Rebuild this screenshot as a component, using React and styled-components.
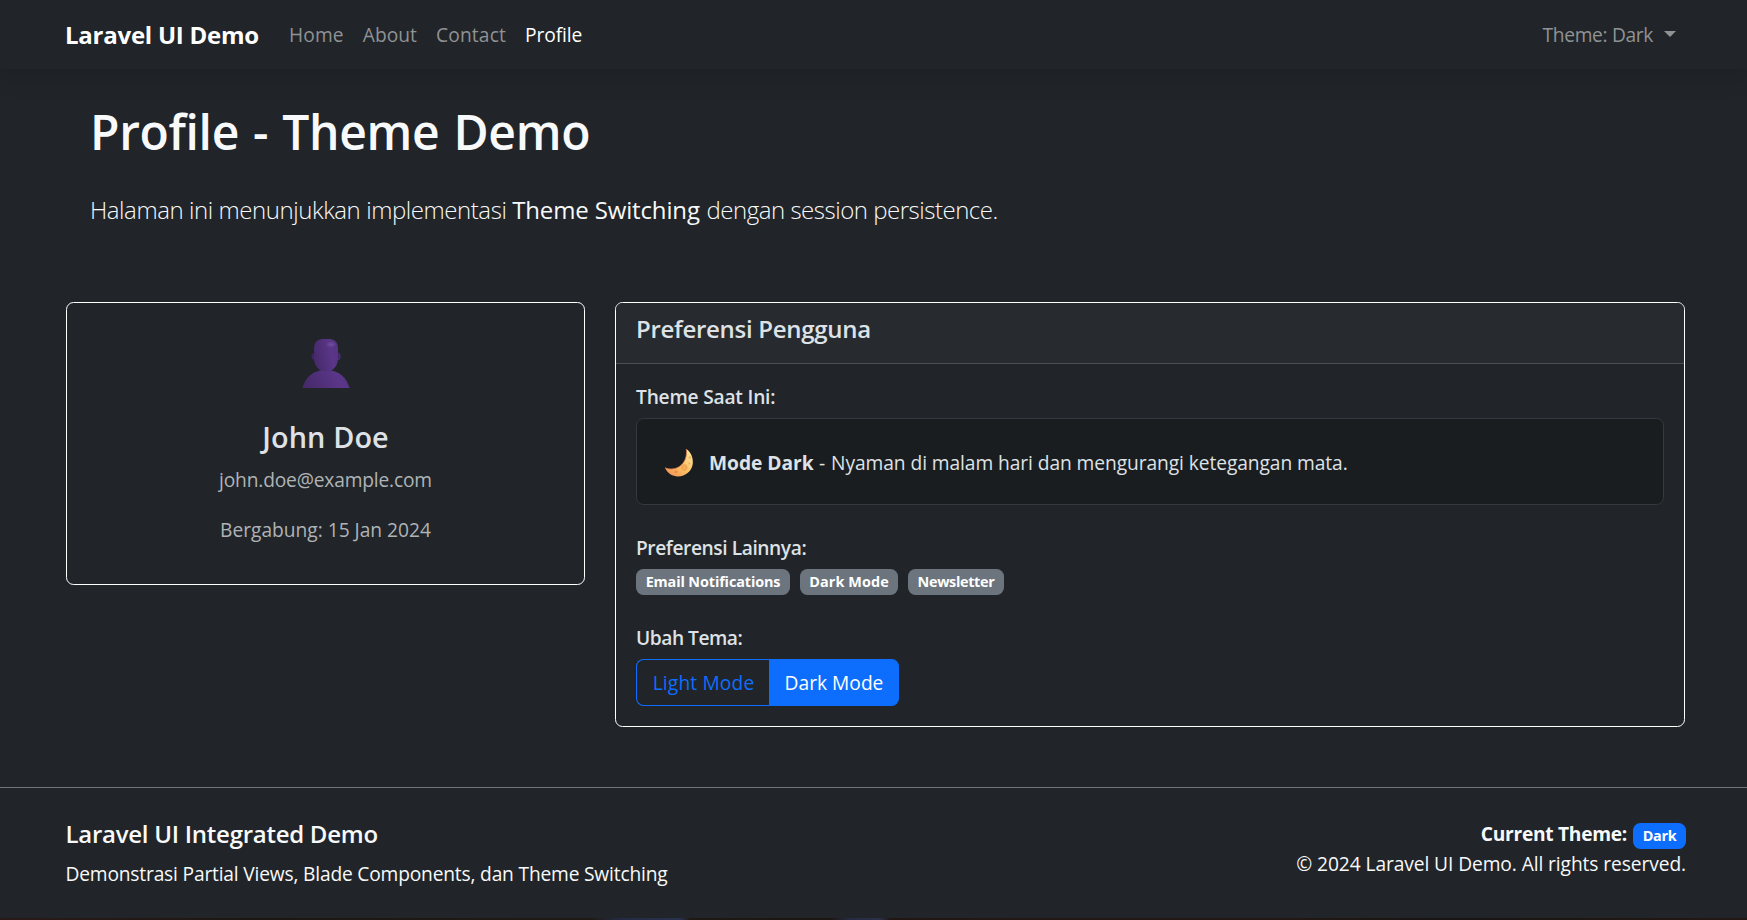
import React, { useState } from "react";
import styled, { createGlobalStyle, css } from "styled-components";

const GlobalStyle = createGlobalStyle`
  *, *::before, *::after { box-sizing: border-box; }
  body {
    margin: 0;
    background: #212529;
    color: #dee2e6;
    font-family: "Open Sans", "Noto Sans", sans-serif;
    font-size: 19.2px;
    line-height: 30px;
    overflow: hidden;
  }
`;

/* tracking is given in thousandths of an em */
const tracked = css`
  letter-spacing: ${({ $track = 0 }) => $track / 1000}em;
  white-space: nowrap;
`;

const Page = styled.div`
  display: flex;
  flex-direction: column;
  height: 920px;
`;

const Navbar = styled.nav`
  display: flex;
  align-items: center;
  flex: none;
  height: 69px;
  padding: 0 71px 0 65px;
  background: #212529;
  box-shadow: 0 10px 20px rgba(0, 0, 0, 0.11);
`;

const Brand = styled.a`
  ${tracked}
  margin-right: 30px;
  color: #fff;
  font-size: 24px;
  font-weight: 700;
`;

const NavLinks = styled.div`
  display: flex;
  gap: 19px;
`;

const NavLink = styled.a`
  ${tracked}
  color: ${({ $active }) => ($active ? "#fff" : "#909294")};
`;

const ThemeToggle = styled(NavLink)`
  display: flex;
  align-items: center;
  gap: 11px;
  margin-left: auto;

  &::after {
    content: "";
    border-top: 6px solid currentColor;
    border-left: 6px solid transparent;
    border-right: 6px solid transparent;
    border-bottom: 0;
    margin-bottom: 2px;
  }
`;

const Hero = styled.header`
  padding: 33px 0 0 90px;
  color: #f8f9fa;
`;

const HeroTitle = styled.h1`
  ${tracked}
  margin: 0 0 29px;
  font-size: 48px;
  font-weight: 600;
  line-height: 60px;
  word-spacing: 2px;
`;

const Lead = styled.p`
  margin: 0;
  font-size: 24px;
  font-weight: 300;
  line-height: 38px;
`;

const LeadPart = styled.span`
  ${tracked}
  font-weight: ${({ $strong }) => ($strong ? 500 : 300)};
  margin-right: ${({ $strong }) => ($strong ? 1 : 0)}px;
`;

const Columns = styled.main`
  display: grid;
  grid-template-columns: 519px 1070px;
  gap: 30px;
  align-items: start;
  margin-top: 73px;
  padding-left: 66px;
`;

const Card = styled.section`
  border: 1px solid #fff;
  border-radius: 7.5px;
  overflow: hidden;
`;

const ProfileCard = styled(Card)`
  display: flex;
  flex-direction: column;
  align-items: center;
  height: 283px;
  padding: 35px 0 0;
`;

const UserName = styled.h4`
  ${tracked}
  margin: 31px 0 10px;
  font-size: 28.8px;
  font-weight: 600;
  line-height: 36px;
`;

const Muted = styled.p`
  ${tracked}
  margin: 0 0 20px;
  color: #afb3b6;
`;

const CardHeader = styled.div`
  height: 61px;
  padding: 11px 20px 0;
  background: #272b2f;
  border-bottom: 1px solid #4c5054;
`;

const CardTitle = styled.h5`
  ${tracked}
  margin: 0;
  font-size: 24px;
  font-weight: 600;
`;

const CardBody = styled.div`
  display: flex;
  flex-direction: column;
  gap: 28px;
  padding: 18px 20px 20px;
`;

const Field = styled.div`
  display: flex;
  flex-direction: column;
  align-items: flex-start;
  gap: 6px;
`;

const Label = styled.h6`
  ${tracked}
  margin: 0;
  font-size: 19.2px;
  font-weight: 600;
`;

const Notice = styled.div`
  display: flex;
  align-items: center;
  align-self: stretch;
  height: 87px;
  padding: 3px 27px 0;
  background: #1a1d20;
  border: 1px solid #343a40;
  border-radius: 7.5px;
`;

const NoticeText = styled.p`
  ${tracked}
  margin: 0 0 0 15px;
`;

const Strong = styled.strong`
  ${tracked}
  font-weight: 700;
`;

const Dash = styled.span`
  margin: 0 1px 0 0.5px;
`;

const Badges = styled.div`
  display: flex;
  gap: 10px;
`;

const Badge = styled.span`
  ${tracked}
  display: inline-flex;
  justify-content: center;
  width: ${({ $width }) => $width}px;
  height: 26px;
  border-radius: 7.5px;
  background: ${({ $primary }) => ($primary ? "#0d6efd" : "#6c757d")};
  color: #fff;
  font-size: 14.4px;
  font-weight: 700;
  line-height: 26px;
`;

const ButtonGroup = styled.div`
  display: flex;
`;

const ModeButton = styled.button`
  width: ${({ $width }) => $width}px;
  height: 47px;
  padding: 0 0 0 1px;
  border: 1px solid #0d6efd;
  background: ${({ $active }) => ($active ? "#0d6efd" : "transparent")};
  color: ${({ $active }) => ($active ? "#fff" : "#0d6efd")};
  font: inherit;
  cursor: pointer;
  ${tracked}

  &:first-child {
    border-right: 0;
    border-radius: 7.5px 0 0 7.5px;
  }
  &:last-child {
    border-left: 0;
    border-radius: 0 7.5px 7.5px 0;
  }
`;

const Footer = styled.footer`
  display: flex;
  justify-content: space-between;
  flex: none;
  height: 131px;
  margin-top: 60px;
  padding: 31px 61px 0 65.5px;
  border-top: 1px solid #6c757d;
  color: #f8f9fa;
`;

const FooterTitle = styled(CardTitle)`
  margin-bottom: 10px;
`;

const FooterText = styled.p`
  ${tracked}
  margin: 0;
`;

const FooterRight = styled.div`
  display: flex;
  flex-direction: column;
  align-items: flex-end;
`;

const CurrentTheme = styled.div`
  display: flex;
  align-items: flex-end;
  gap: 6px;
  height: 30px;
`;

const BottomEdge = styled.div`
  flex: none;
  height: 2px;
  background: linear-gradient(
    90deg,
    #2a1a17 0, #1c1713 260px, #201a14 590px, #242a42 620px, #28324e 680px,
    #1e1913 690px, #1c1612 830px, #272a42 850px, #2a3048 880px,
    #201713 890px, #241814 1250px, #181512 1450px, #241813 1747px
  );
`;

const UserIcon = () => (
  <svg width="48" height="50" viewBox="0 0 48 50" aria-hidden="true">
    <defs>
      <linearGradient id="skin" x1="0" x2="1" y1="0.4" y2="0.2">
        <stop offset="0" stopColor="#472a6b" />
        <stop offset="0.7" stopColor="#5a3689" />
        <stop offset="1" stopColor="#573383" />
      </linearGradient>
      <radialGradient id="shine">
        <stop offset="0" stopColor="#71509f" />
        <stop offset="1" stopColor="#71509f" stopOpacity="0" />
      </radialGradient>
    </defs>
    <ellipse cx="11.500" cy="18.500" rx="2" ry="3.300" fill="#3f2261" />
    <ellipse cx="36" cy="18.500" rx="2.200" ry="3.300" fill="#3f2261" stroke="#563381" strokeWidth="0.900" />
    <path d="M0.500 50C3 40 10 33 21 32.200h6C37.500 33 45 40 47.500 50Z" fill="url(#skin)" />
    <path d="M12 10.500C12 4.500 15.500 1 20.500 1h7C32.500 1 36 4.500 36 10.500V20c0 7.500-4.500 13.500-12 13.500S12 27.500 12 20Z" fill="url(#skin)" />
    <ellipse cx="29" cy="6.500" rx="5.500" ry="3.200" fill="url(#shine)" />
  </svg>
);

const MoonIcon = () => (
  <svg width="30" height="30" viewBox="0 0 30 30" aria-hidden="true">
    <defs>
      <linearGradient id="moon" x1="0.9" x2="0.3" y1="0.1" y2="1">
        <stop offset="0" stopColor="#ffe097" />
        <stop offset="0.55" stopColor="#fdc468" />
        <stop offset="1" stopColor="#f59a55" />
      </linearGradient>
    </defs>
    <path d="M22.300 1C27 4.300 29.300 9.500 28.800 15.500 28 23 21.500 28.500 14 28.500 8.500 28.500 3.500 25.300 1 19.800c4.200 1.800 10 1.700 14.500-1.300C20.800 14.800 23.300 8.500 22.300 1Z" fill="url(#moon)" />
    <path d="M22.300 1C23.300 8.500 20.800 14.800 15.500 18.500 11 21.500 5.200 21.600 1 19.800" fill="none" stroke="#d9784a" strokeWidth="0.800" />
    <circle cx="20.300" cy="19.500" r="2.900" fill="#f3ad55" stroke="#e99b4d" strokeWidth="0.600" />
    <circle cx="25.800" cy="9.500" r="1.300" fill="#f0b25c" />
    <circle cx="12" cy="23.800" r="1.400" fill="#e88a4a" />
    <circle cx="25.300" cy="15.500" r="0.900" fill="#f0a955" />
  </svg>
);

export default function App() {
  const [mode] = useState("Dark");
  return (
    <Page>
      <GlobalStyle />
      <Navbar>
        <Brand $track={-10}>Laravel UI Demo</Brand>
        <NavLinks>
          <NavLink $track={8}>Home</NavLink>
          <NavLink $track={2}>About</NavLink>
          <NavLink $track={8}>Contact</NavLink>
          <NavLink $active $track={-4}>Profile</NavLink>
        </NavLinks>
        <ThemeToggle $track={-18}>Theme: {mode}</ThemeToggle>
      </Navbar>

      <Hero>
        <HeroTitle $track={-7}>Profile - Theme Demo</HeroTitle>
        <Lead>
          <LeadPart $track={-18}>Halaman ini menunjukkan implementasi </LeadPart>
          <LeadPart $strong $track={-6}>Theme Switching</LeadPart>
          <LeadPart $track={-20}> dengan session persistence.</LeadPart>
        </Lead>
      </Hero>

      <Columns>
        <ProfileCard>
          <UserIcon />
          <UserName $track={5}>John Doe</UserName>
          <Muted $track={-9}>john.doe@example.com</Muted>
          <Muted $track={-1}>Bergabung: 15 Jan 2024</Muted>
        </ProfileCard>

        <Card>
          <CardHeader>
            <CardTitle $track={-12}>Preferensi Pengguna</CardTitle>
          </CardHeader>
          <CardBody>
            <Field>
              <Label $track={-11}>Theme Saat Ini:</Label>
              <Notice>
                <MoonIcon />
                <NoticeText $track={-4}>
                  <Strong $track={-1}>Mode {mode}</Strong> <Dash>-</Dash> Nyaman di malam hari dan mengurangi ketegangan mata.
                </NoticeText>
              </Notice>
            </Field>
            <Field>
              <Label $track={-22}>Preferensi Lainnya:</Label>
              <Badges>
                <Badge $width={154} $track={-8}>Email Notifications</Badge>
                <Badge $width={98} $track={7}>Dark Mode</Badge>
                <Badge $width={96} $track={-23}>Newsletter</Badge>
              </Badges>
            </Field>
            <Field>
              <Label $track={-25}>Ubah Tema:</Label>
              <ButtonGroup>
                <ModeButton $width={133} $track={8}>Light Mode</ModeButton>
                <ModeButton $width={130} $active>Dark Mode</ModeButton>
              </ButtonGroup>
            </Field>
          </CardBody>
        </Card>
      </Columns>

      <Footer>
        <div>
          <FooterTitle $track={-11}>Laravel UI Integrated Demo</FooterTitle>
          <FooterText $track={-9.5}>
            Demonstrasi Partial Views, Blade Components, dan Theme Switching
          </FooterText>
        </div>
        <FooterRight>
          <CurrentTheme>
            <Strong $track={-15}>Current Theme:</Strong>
            <Badge $primary $width={53} $track={-20}>{mode}</Badge>
          </CurrentTheme>
          <FooterText $track={-4.7}>© 2024 Laravel UI Demo. All rights reserved.</FooterText>
        </FooterRight>
      </Footer>
      <BottomEdge />
    </Page>
  );
}
